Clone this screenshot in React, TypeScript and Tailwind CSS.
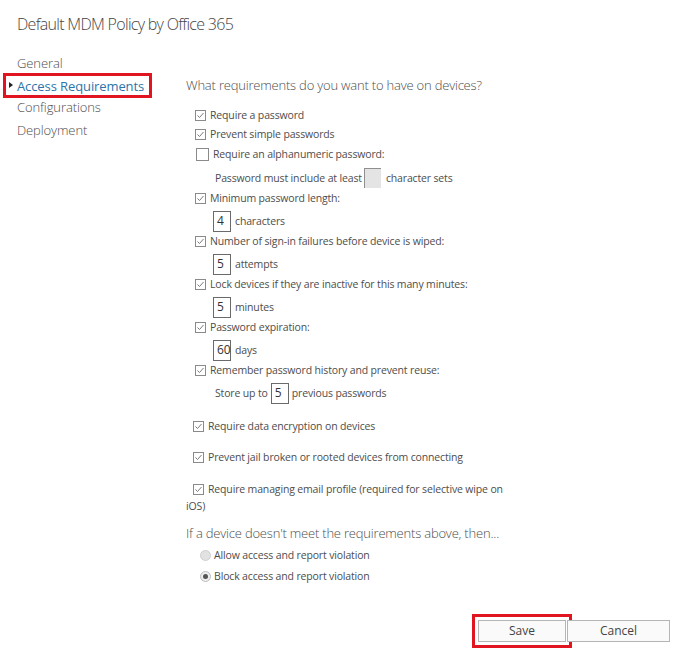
import React from "react";

const Check = ({ checked = true, big = false }: { checked?: boolean; big?: boolean }) => (
  <span
    className={
      "inline-flex shrink-0 items-center justify-center border border-[#8a8a8a] bg-white " +
      (big ? "h-[13px] w-[13px]" : "h-[11px] w-[11px]")
    }
  >
    {checked && (
      <svg width="9" height="9" viewBox="0 0 9 9">
        <polyline points="1.5,4.5 3.5,6.5 7.5,2" fill="none" stroke="#7a7a7a" strokeWidth="1" />
      </svg>
    )}
  </span>
);

const Box = ({ value }: { value: string }) => (
  <span className="inline-flex h-[21px] w-[18px] items-center border border-[#6a6a6a] bg-white pl-[3px] text-[12px] tracking-normal text-[#333]">
    {value}
  </span>
);

export default function App() {
  return (
    <div className="relative h-[663px] w-[700px] overflow-hidden bg-white font-['Open_Sans',sans-serif] text-[#4d4d4d]">
      {/* Title */}
      <div className="pl-[17px] pt-[13px] text-[16px] font-light leading-[22px] tracking-[-0.7px] text-[#444]">
        Default MDM Policy by Office 365
      </div>

      <div className="flex">
        {/* Left nav */}
        <div className="w-[186px] shrink-0 pt-[18px] text-[13px] font-light leading-[20px] tracking-[-0.1px]">
          <div className="h-[20px] pl-[17px]">General</div>
          <div className="relative ml-[3px] flex h-[25px] w-[149px] items-center border-[3px] border-[#e01520] pl-[11px]">
            <span className="absolute left-[3px] top-[6px] h-0 w-0 border-y-[3px] border-l-[4px] border-y-transparent border-l-[#222]" />
            <span className="font-normal text-[#2b74aa]">Access Requirements</span>
          </div>
          <div className="mt-[-1px] h-[20px] pl-[17px]">Configurations</div>
          <div className="mt-[3px] h-[20px] pl-[17px]">Deployment</div>
        </div>

        {/* Content */}
        <div className="flex flex-col pt-[42px] text-[10.5px] leading-[16px] tracking-[-0.15px]">
          <div className="flex h-[16px] items-center text-[13px] font-light tracking-[-0.2px]">
            What requirements do you want to have on devices?
          </div>

          <div className="ml-[9px] mt-[14px] flex h-[16px] items-center gap-[4px]">
            <Check />
            <span>Require a password</span>
          </div>
          <div className="ml-[9px] mt-[3px] flex h-[16px] items-center gap-[4px]">
            <Check />
            <span>Prevent simple passwords</span>
          </div>
          <div className="ml-[10px] mt-[4px] flex h-[16px] items-center gap-[4px]">
            <Check checked={false} big />
            <span>Require an alphanumeric password:</span>
          </div>
          <div className="ml-[29px] mt-[8px] flex h-[16px] items-center">
            <span>Password must include at least</span>
            <span className="ml-[2px] mr-[5px] h-[20px] w-[17px] border-l border-t border-[#8f8f8f] bg-[#e4e4e4]" />
            <span>character sets</span>
          </div>
          <div className="ml-[9px] mt-[4px] flex h-[16px] items-center gap-[4px]">
            <Check />
            <span>Minimum password length:</span>
          </div>
          <div className="ml-[27px] mt-[7px] flex h-[16px] items-center gap-[4px]">
            <Box value="4" />
            <span>characters</span>
          </div>
          <div className="ml-[9px] mt-[4px] flex h-[16px] items-center gap-[4px]">
            <Check />
            <span>Number of sign-in failures before device is wiped:</span>
          </div>
          <div className="ml-[27px] mt-[7px] flex h-[16px] items-center gap-[4px]">
            <Box value="5" />
            <span>attempts</span>
          </div>
          <div className="ml-[9px] mt-[4px] flex h-[16px] items-center gap-[4px]">
            <Check />
            <span>Lock devices if they are inactive for this many minutes:</span>
          </div>
          <div className="ml-[27px] mt-[7px] flex h-[16px] items-center gap-[4px]">
            <Box value="5" />
            <span>minutes</span>
          </div>
          <div className="ml-[9px] mt-[4px] flex h-[16px] items-center gap-[4px]">
            <Check />
            <span>Password expiration:</span>
          </div>
          <div className="ml-[27px] mt-[7px] flex h-[16px] items-center gap-[4px]">
            <Box value="60" />
            <span>days</span>
          </div>
          <div className="ml-[9px] mt-[4px] flex h-[16px] items-center gap-[4px]">
            <Check />
            <span>Remember password history and prevent reuse:</span>
          </div>
          <div className="ml-[29px] mt-[7px] flex h-[16px] items-center">
            <span>Store up to</span>
            <span className="ml-[3px] mr-[3px]">
              <Box value="5" />
            </span>
            <span>previous passwords</span>
          </div>

          <div className="ml-[7px] mt-[17px] flex h-[16px] items-center gap-[4px]">
            <Check />
            <span>Require data encryption on devices</span>
          </div>
          <div className="ml-[7px] mt-[15px] flex h-[16px] items-center gap-[4px]">
            <Check />
            <span>Prevent jail broken or rooted devices from connecting</span>
          </div>
          <div className="ml-[7px] mt-[16px] flex h-[16px] items-center gap-[4px]">
            <Check />
            <span>Require managing email profile (required for selective wipe on</span>
          </div>
          <div className="mt-[1px] h-[16px]">iOS)</div>

          <div className="mt-[11px] flex h-[16px] items-center text-[13px] font-light tracking-[-0.2px]">
            If a device doesn't meet the requirements above, then...
          </div>
          <div className="ml-[14px] mt-[6px] flex h-[16px] items-center gap-[3px]">
            <span className="h-[11px] w-[11px] rounded-full border border-[#cfcfcf] bg-[#e2e2e2]" />
            <span>Allow access and report violation</span>
          </div>
          <div className="ml-[14px] mt-[5px] flex h-[16px] items-center gap-[3px]">
            <span className="flex h-[11px] w-[11px] items-center justify-center rounded-full border border-[#bdbdbd] bg-[#eeeeee]">
              <span className="h-[5px] w-[5px] rounded-full bg-[#555]" />
            </span>
            <span>Block access and report violation</span>
          </div>
        </div>
      </div>

      {/* Buttons */}
      <div className="absolute left-[472px] top-[614px] flex items-center">
        <div className="border-[3px] border-[#e01520] p-[3px]">
          <button className="flex h-[22px] w-[88px] items-center justify-center border border-[#b5b5b5] bg-[#fafafa] text-[12px] text-[#444]">
            Save
          </button>
        </div>
        <button className="ml-[-5px] flex h-[22px] w-[103px] items-center justify-center border border-[#b5b5b5] bg-[#fafafa] text-[12px] text-[#444]">
          Cancel
        </button>
      </div>
    </div>
  );
}
